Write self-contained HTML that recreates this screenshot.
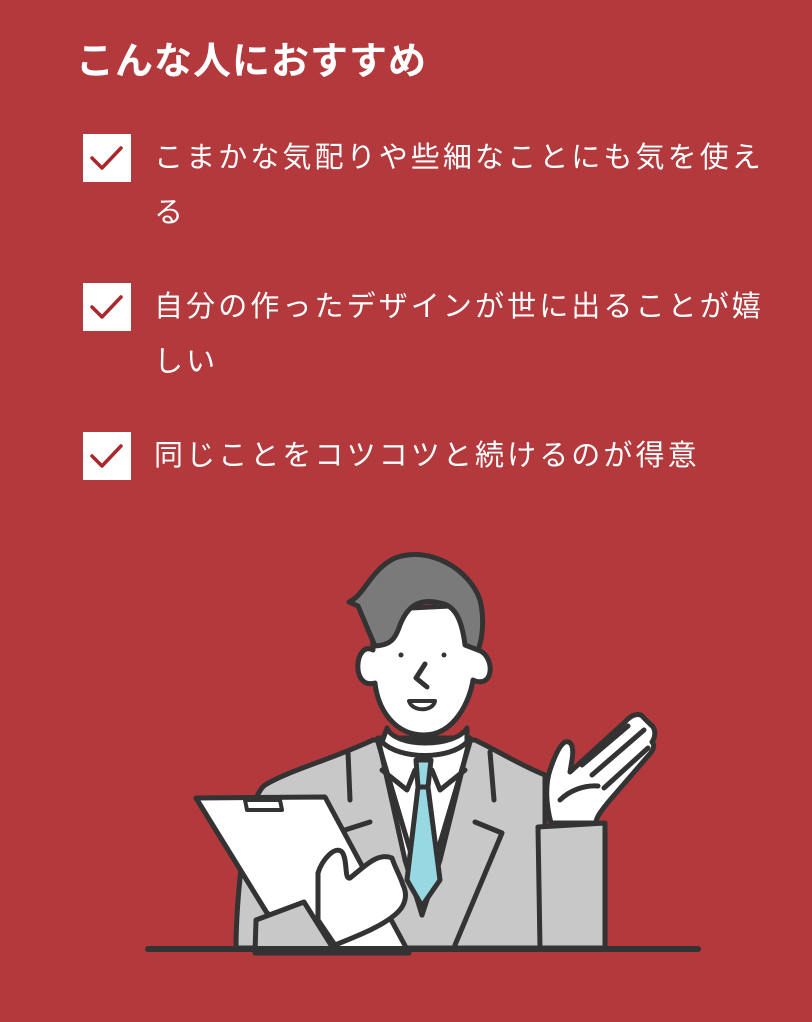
<!DOCTYPE html>
<html><head><meta charset="utf-8">
<style>
html,body{margin:0;padding:0}
body{width:812px;height:1022px;background:#b3393c;position:relative;overflow:hidden;font-family:"Liberation Sans","Noto Sans CJK JP",sans-serif;color:#fff}
h1{position:absolute;left:76px;top:36px;margin:0;font-size:38px;font-weight:bold;letter-spacing:1px;line-height:52px}
.item{position:absolute;left:83px}
.box{position:absolute;left:0;top:0;width:48px;height:48px;background:#fff}
.box svg{position:absolute;left:0;top:0}
.txt{position:absolute;left:71px;top:0;font-size:29px;letter-spacing:3.1px;line-height:55px;white-space:nowrap;margin-top:-3px}
</style></head><body>
<h1>こんな人におすすめ</h1>
<div class="item" style="top:134px"><div class="box"><svg width="48" height="48"><path d="M9 24 L19 34 L38 14" fill="none" stroke="#a8282c" stroke-width="3.5" stroke-linecap="round" stroke-linejoin="round"/></svg></div><div class="txt">こまかな気配りや些細なことにも気を使え<br>る</div></div>
<div class="item" style="top:283px"><div class="box"><svg width="48" height="48"><path d="M9 24 L19 34 L38 14" fill="none" stroke="#a8282c" stroke-width="3.5" stroke-linecap="round" stroke-linejoin="round"/></svg></div><div class="txt">自分の作ったデザインが世に出ることが嬉<br>しい</div></div>
<div class="item" style="top:432px"><div class="box"><svg width="48" height="48"><path d="M9 24 L19 34 L38 14" fill="none" stroke="#a8282c" stroke-width="3.5" stroke-linecap="round" stroke-linejoin="round"/></svg></div><div class="txt">同じことをコツコツと続けるのが得意</div></div>

<svg width="812" height="1022" style="position:absolute;left:0;top:0" fill="none" stroke="#333" stroke-width="5" stroke-linecap="round" stroke-linejoin="round">
<path d="M236 948 C236 900 245 800 265 785 C290 770 330 760 373 740 L475 740 C500 752 520 765 545 775 L545 948 Z" fill="#c8c8c8"/>
<path d="M538 827 L605 823 L605 948 L540 948 Z" fill="#c8c8c8"/>
<path d="M378 738 L470 738 L440 860 L422 915 L405 860 Z" fill="#fff"/>
<path d="M378 742 L410 850 L422 915" />
<path d="M470 742 L438 850 L422 915"/>
<path d="M348 752 L350 800 M490 752 L494 800"/>
<path d="M345 830 L370 822 M475 822 L502 833 L455 945"/>
<path d="M382 770 L407 790 L415 770 M465 770 L440 790 L432 770"/>
<path d="M416 760 L431 760 L428 787 L418 787 Z" fill="#97d8e3"/>
<path d="M418 787 L428 787 L440 880 L422 906 L407 880 Z" fill="#97d8e3"/>
<path d="M387 728 C395 748 455 748 467 728 L467 742 C450 760 400 760 382 742 Z" fill="#fff"/>
<path d="M373 650 C355 640 350 690 375 683 C378 710 395 735 424 735 C455 735 470 700 473 680 C495 690 495 655 478 650 L470 605 L372 610 Z" fill="#fff"/>
<path d="M349 602 C365 595 370 570 395 558 C430 545 470 570 480 600 C485 620 482 640 478 650 L465 645 C462 620 455 605 440 603 C420 598 408 605 400 625 C395 640 390 645 375 646 C368 630 362 615 358 606 Z" fill="#7a7a7a"/>
<circle cx="401" cy="655" r="2.5" fill="#333" stroke="none"/>
<circle cx="444" cy="655" r="2.5" fill="#333" stroke="none"/>
<path d="M425 664 L416 678 L427 687"/>
<path d="M409 701 L435 701 C433 712 412 712 409 701 Z" fill="#fff" stroke-width="4"/>
<!-- right hand -->
<path d="M551 823 C546 805 545 785 550 770 C555 755 560 745 565 742 C572 740 574 748 572 760 L570 772 L625 722 C632 714 640 712 644 718 L650 724 C656 728 656 736 652 742 C656 746 652 752 648 756 L610 800 C600 812 596 818 596 823 Z" fill="#fff"/>
<path d="M582 765 L628 726 M592 775 L644 730 M604 788 L648 748 M560 800 C570 790 585 785 598 786"/>
<!-- clipboard -->
<path d="M196 798 L325 797 L409 953 L336 953 L267 913 Z" fill="#fff"/>
<path d="M245 800 L280 800 L282 810 L247 810 Z" fill="#fff" stroke-width="4"/>
<!-- left hand -->
<path d="M318 873 C322 860 335 845 342 852 C348 860 344 880 350 878 C365 866 378 852 392 858 C396 870 400 875 403 885 C408 895 405 905 398 912 C385 925 360 935 335 945 L318 920 Z" fill="#fff"/>
<!-- left sleeve -->
<path d="M256 920 L304 902 L336 953 L255 953 Z" fill="#c8c8c8"/>
<path d="M148 949 L698 949" stroke-width="6"/>
</svg>
</body></html>
